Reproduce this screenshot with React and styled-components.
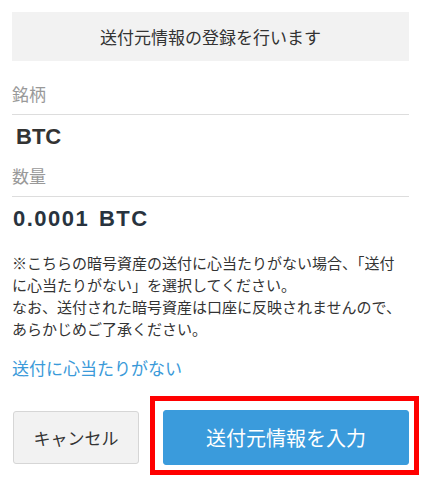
import styled, { createGlobalStyle } from "styled-components";

const Global = createGlobalStyle`
  html, body {
    margin: 0;
    padding: 0;
    background: #fff;
  }
  body {
    font-family: "Liberation Sans", "Noto Sans CJK JP", sans-serif;
    color: #333;
  }
`;

const Dialog = styled.div`
  width: 422px;
  height: 477px;
  box-sizing: border-box;
  padding: 12px 13px 0 12px;
  display: flex;
  flex-direction: column;
  overflow: hidden;
`;

const Header = styled.div`
  height: 49px;
  flex-shrink: 0;
  background: #f2f2f2;
  display: flex;
  align-items: center;
  justify-content: center;
  font-size: 17px;
  color: #333;
`;

const Label = styled.div`
  margin-top: ${(p) => p.top}px;
  padding-bottom: 8px;
  border-bottom: 1px solid #ddd;
  font-size: 17px;
  line-height: 20px;
  color: #999;
`;

const Value = styled.div`
  margin-top: 10px;
  padding-left: ${(p) => (p.indent ? 4 : 1)}px;
  font-size: 22px;
  line-height: 24px;
  font-weight: bold;
  color: ${(p) => p.color || "#333"};
  letter-spacing: ${(p) => p.spacing || 0}px;
  word-spacing: ${(p) => (p.spacing ? 2 : 0)}px;
`;

const Note = styled.p`
  margin: 22px 0 0;
  font-size: 15px;
  line-height: 22px;
  color: #333;
`;

const Link = styled.a`
  display: block;
  margin-top: 18px;
  font-size: 17px;
  line-height: 22px;
  color: #3a9ad9;
  text-decoration: none;
`;

const Actions = styled.div`
  margin-top: 15px;
  display: flex;
  align-items: flex-start;
`;

const Button = styled.button`
  box-sizing: border-box;
  flex-shrink: 0;
  border-radius: 3px;
  font-family: inherit;
  cursor: pointer;
  padding: 0;
  border: 1px solid ${(p) => (p.primary ? "#3a9bdc" : "#d6d6d6")};
  background: ${(p) => (p.primary ? "#3a9bdc" : "#f2f2f2")};
  color: ${(p) => (p.primary ? "#fff" : "#333")};
`;

const CancelButton = styled(Button)`
  width: 126px;
  height: 53px;
  margin-top: 15px;
  margin-left: 1px;
  font-size: 17px;
`;

const Highlight = styled.div`
  flex-shrink: 0;
  margin-left: 11px;
  box-sizing: border-box;
  border: 5px solid #ff0000;
  padding: 9px 5px 5px 8px;
`;

const PrimaryButton = styled(Button)`
  display: block;
  width: 246px;
  height: 55px;
  font-size: 20px;
`;

const App = () => {
  return (
    <>
      <Global />
      <Dialog>
        <Header>送付元情報の登録を行います</Header>
        <Label top={25}>銘柄</Label>
        <Value indent>BTC</Value>
        <Label top={19}>数量</Label>
        <Value color="#28333e" spacing={1.5}>
          0.0001 BTC
        </Value>
        <Note>
          ※こちらの暗号資産の送付に心当たりがない場合、「送付に心当たりがない」を選択してください。
          <br />
          なお、送付された暗号資産は口座に反映されませんので、あらかじめご了承ください。
        </Note>
        <Link href="#">送付に心当たりがない</Link>
        <Actions>
          <CancelButton>キャンセル</CancelButton>
          <Highlight>
            <PrimaryButton primary>送付元情報を入力</PrimaryButton>
          </Highlight>
        </Actions>
      </Dialog>
    </>
  );
};

export default App;
